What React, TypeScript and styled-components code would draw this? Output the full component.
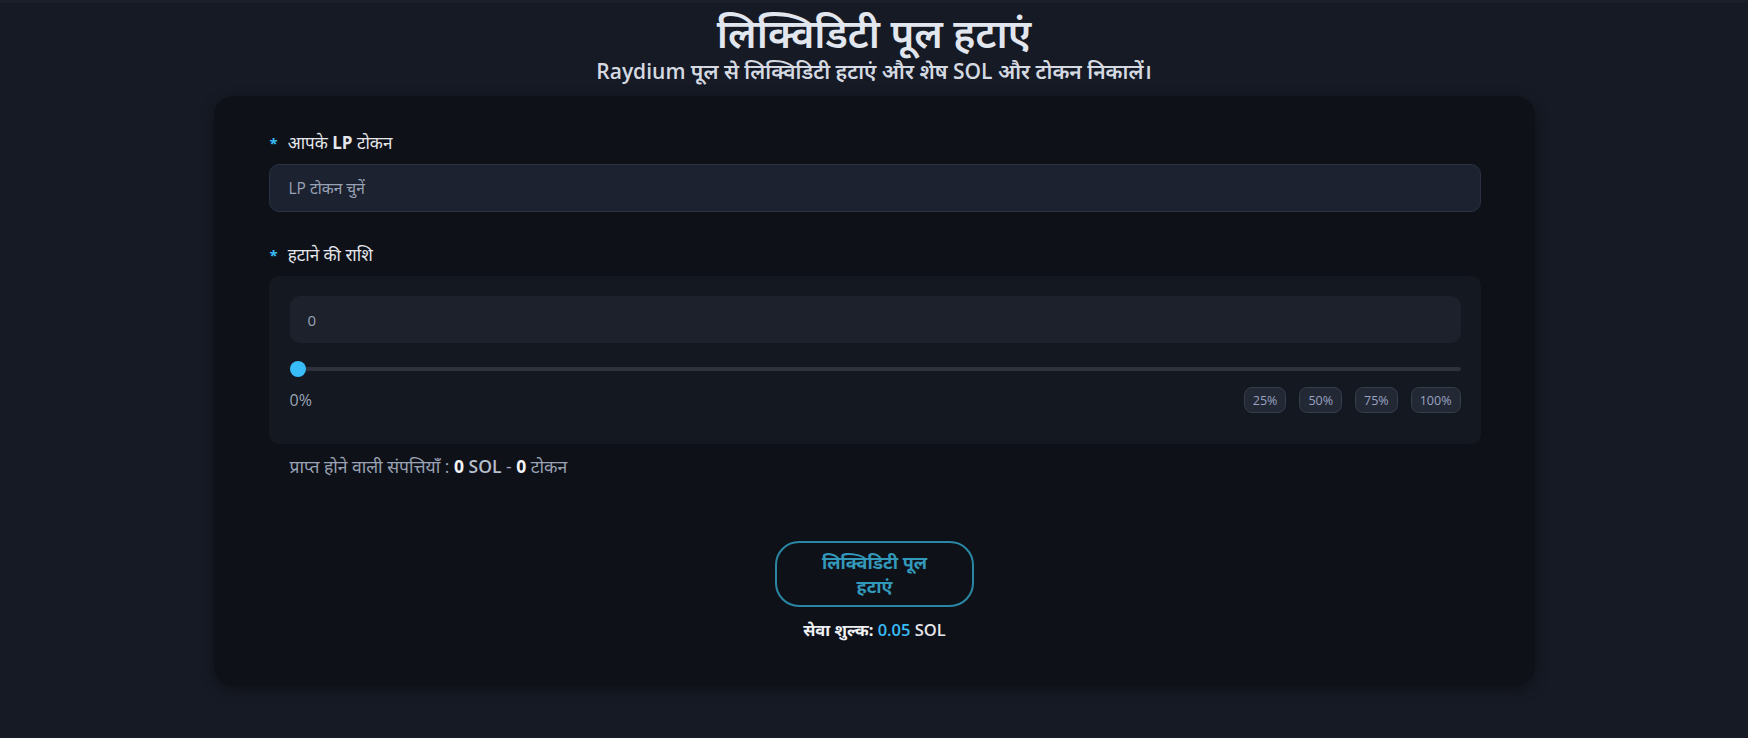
import React, { useState } from "react";
import styled, { createGlobalStyle } from "styled-components";

const GlobalStyle = createGlobalStyle`
  * { box-sizing: border-box; }
  html, body { margin: 0; padding: 0; }
  body {
    background: #161a24;
    font-family: "Open Sans", "Noto Sans", "Noto Sans Devanagari", "Lohit Devanagari", sans-serif;
    color: #e5e7eb;
  }
`;

const Page = styled.div`
  min-height: 738px;
  border-top: 3px solid #1b1f2a;
  display: flex;
  flex-direction: column;
  align-items: center;
`;

const Header = styled.header`
  display: flex;
  flex-direction: column;
  align-items: center;
  padding-top: 4px;
  height: 93px;
`;

const Title = styled.h1`
  margin: 0;
  font-size: 40px;
  line-height: 52px;
  font-weight: 600;
  color: #e2e6ee;
`;

const Subtitle = styled.p`
  margin: 0;
  font-size: 21px;
  line-height: 24px;
  font-weight: 600;
  color: #d4d9e2;
`;

const Card = styled.section`
  width: 1321px;
  background: #0f1119;
  border-radius: 20px;
  box-shadow: 0 4px 14px rgba(0, 0, 0, 0.35);
  padding: 36px 54px 45px 55px;
  display: flex;
  flex-direction: column;
`;

const Field = styled.div<{ $gap?: number }>`
  display: flex;
  flex-direction: column;
  gap: 10px;
  margin-bottom: ${(p) => p.$gap ?? 0}px;
`;

const Label = styled.label`
  display: flex;
  align-items: center;
  gap: 10px;
  font-size: 17px;
  line-height: 22px;
  color: #e5e7eb;
  padding-left: 1px;
  b { font-weight: 700; }
`;

const Star = styled.span`
  color: #38bdf8;
  font-size: 15px;
  font-weight: 700;
`;

const SelectBox = styled.div`
  height: 48px;
  background: #1d2230;
  border: 1px solid #2b3142;
  border-radius: 10px;
  display: flex;
  align-items: center;
  padding: 0 19px;
  font-size: 15.5px;
  color: #9aa3b5;
`;

const AmountBox = styled.div`
  background: #141821;
  border-radius: 10px;
  padding: 20px 20px 31px 21px;
  display: flex;
  flex-direction: column;
`;

const AmountInput = styled.div`
  height: 47px;
  background: #1c212c;
  border-radius: 10px;
  display: flex;
  align-items: center;
  padding: 0 18px;
  font-size: 15px;
  color: #9aa3b5;
`;

const Range = styled.input`
  -webkit-appearance: none;
  appearance: none;
  width: 100%;
  height: 16px;
  margin: 18px 0 0;
  background: transparent;
  &::-webkit-slider-runnable-track {
    height: 4px;
    background: #2d323d;
    border-radius: 2px;
  }
  &::-webkit-slider-thumb {
    -webkit-appearance: none;
    width: 16px;
    height: 16px;
    border-radius: 50%;
    background: #38bdf8;
    margin-top: -6px;
    border: none;
  }
`;

const RangeFooter = styled.div`
  display: flex;
  justify-content: space-between;
  align-items: center;
  margin-top: 10px;
`;

const Percent = styled.span`
  font-size: 16px;
  color: #9aa3b5;
`;

const Presets = styled.div`
  display: flex;
  gap: 13px;
`;

const Preset = styled.button`
  height: 26px;
  padding: 0 8px;
  background: #232835;
  border: 1px solid #363c4b;
  border-radius: 8px;
  color: #9aa3c2;
  font-family: inherit;
  font-size: 12.5px;
  cursor: pointer;
`;

const Summary = styled.p`
  margin: 10px 0 0 21px;
  font-size: 17.5px;
  line-height: 24px;
  color: #9aa3b5;
  strong { color: #f3f4f6; font-weight: 700; }
  span.sol { color: #b8bfcc; font-weight: 600; }
`;

const Actions = styled.div`
  display: flex;
  flex-direction: column;
  align-items: center;
  margin-top: 63px;
  gap: 11px;
`;

const SubmitButton = styled.button`
  width: 199px;
  height: 66px;
  background: transparent;
  border: 2px solid #2a87a3;
  border-radius: 24px;
  color: #3399bb;
  font-family: inherit;
  font-size: 18px;
  line-height: 24px;
  font-weight: 700;
  padding: 0 32px;
  cursor: pointer;
`;

const Fee = styled.p`
  margin: 0;
  font-size: 16.5px;
  font-weight: 700;
  color: #eef0f4;
  span.amt { color: #38bdf8; font-weight: 600; }
  span.unit { font-weight: 600; color: #e5e7eb; }
`;

export default function App() {
  const [value, setValue] = useState(0);
  return (
    <>
      <GlobalStyle />
      <Page>
        <Header>
          <Title>लिक्विडिटी पूल हटाएं</Title>
          <Subtitle>Raydium पूल से लिक्विडिटी हटाएं और शेष SOL और टोकन निकालें।</Subtitle>
        </Header>
        <Card>
          <Field $gap={32}>
            <Label>
              <Star>*</Star>
              <span>आपके <b>LP</b> टोकन</span>
            </Label>
            <SelectBox>LP टोकन चुनें</SelectBox>
          </Field>
          <Field>
            <Label>
              <Star>*</Star>
              <span>हटाने की राशि</span>
            </Label>
            <AmountBox>
              <AmountInput>{value}</AmountInput>
              <Range
                type="range"
                min={0}
                max={100}
                value={value}
                onChange={(e) => setValue(Number(e.target.value))}
              />
              <RangeFooter>
                <Percent>{value}%</Percent>
                <Presets>
                  {[25, 50, 75, 100].map((p) => (
                    <Preset key={p} onClick={() => setValue(p)}>{p}%</Preset>
                  ))}
                </Presets>
              </RangeFooter>
            </AmountBox>
          </Field>
          <Summary>
            प्राप्त होने वाली संपत्तियाँ : <strong>0</strong> <span className="sol">SOL</span> - <strong>0</strong> टोकन
          </Summary>
          <Actions>
            <SubmitButton>लिक्विडिटी पूल हटाएं</SubmitButton>
            <Fee>
              सेवा शुल्क: <span className="amt">0.05</span> <span className="unit">SOL</span>
            </Fee>
          </Actions>
        </Card>
      </Page>
    </>
  );
}
